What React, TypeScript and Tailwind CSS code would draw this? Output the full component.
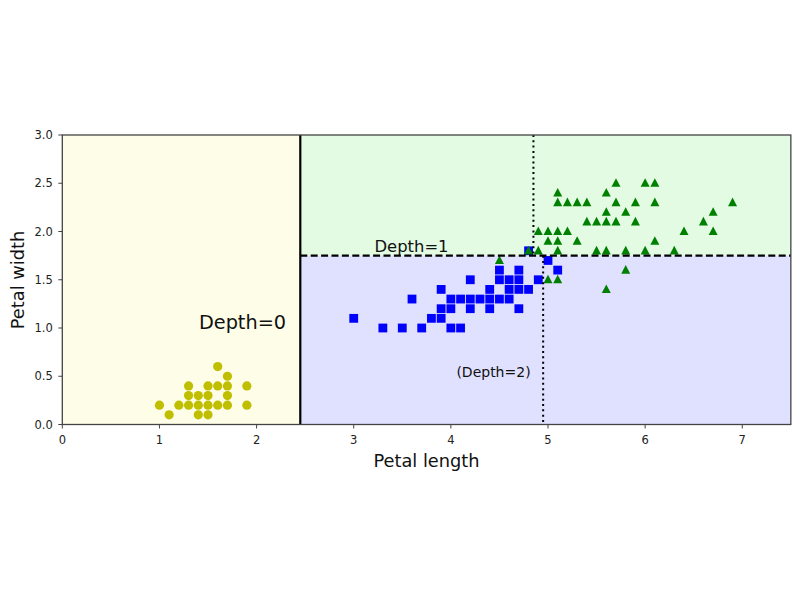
const X0 = 62.3;
const XS = 97.14;
const Y0 = 424.5;
const YS = 96.5;

const px = (v: number) => X0 + v * XS;
const py = (v: number) => Y0 - v * YS;

const setosa: [number, number][] = [
  [1.4, 0.2], [1.3, 0.2], [1.5, 0.2], [1.7, 0.4], [1.4, 0.3], [1.5, 0.1],
  [1.6, 0.2], [1.4, 0.1], [1.1, 0.1], [1.2, 0.2], [1.5, 0.4], [1.3, 0.4],
  [1.7, 0.3], [1.5, 0.3], [1.7, 0.2], [1.0, 0.2], [1.7, 0.5], [1.9, 0.2],
  [1.6, 0.4], [1.3, 0.3], [1.6, 0.6], [1.9, 0.4],
];

const versicolor: [number, number][] = [
  [4.7, 1.4], [4.5, 1.5], [4.9, 1.5], [4.0, 1.3], [4.6, 1.5], [4.5, 1.3],
  [4.7, 1.6], [3.3, 1.0], [4.6, 1.3], [3.9, 1.4], [3.5, 1.0], [4.2, 1.5],
  [4.0, 1.0], [3.6, 1.3], [4.4, 1.4], [4.1, 1.0], [3.9, 1.1], [4.8, 1.8],
  [4.7, 1.2], [4.3, 1.3], [4.8, 1.4], [5.0, 1.7], [3.8, 1.1], [3.7, 1.0],
  [3.9, 1.2], [5.1, 1.6], [4.5, 1.6], [4.7, 1.5], [4.4, 1.3], [4.1, 1.3],
  [4.4, 1.2], [4.6, 1.4], [4.0, 1.2], [4.2, 1.3], [4.2, 1.2], [3.0, 1.1],
];

const virginica: [number, number][] = [
  [6.0, 2.5], [5.1, 1.9], [5.9, 2.1], [5.6, 1.8], [5.8, 2.2], [6.6, 2.1],
  [4.5, 1.7], [6.3, 1.8], [5.8, 1.8], [6.1, 2.5], [5.1, 2.0], [5.3, 1.9],
  [5.5, 2.1], [5.0, 2.0], [5.1, 2.4], [5.3, 2.3], [5.5, 1.8], [6.7, 2.2],
  [6.9, 2.3], [5.0, 1.5], [5.7, 2.3], [4.9, 2.0], [6.7, 2.0], [4.9, 1.8],
  [5.7, 2.1], [6.0, 1.8], [4.8, 1.8], [5.6, 2.1], [5.8, 1.6], [6.1, 1.9],
  [6.4, 2.0], [5.6, 2.2], [5.1, 1.5], [5.6, 1.4], [6.1, 2.3], [5.6, 2.4],
  [5.4, 2.1], [5.1, 2.3], [5.9, 2.3], [5.7, 2.5], [5.2, 2.3], [5.0, 1.9],
  [5.2, 2.0], [5.4, 2.3], [5.1, 1.8],
];

const xTicks = [0, 1, 2, 3, 4, 5, 6, 7];
const yTicks = [0, 0.5, 1, 1.5, 2, 2.5, 3];

const font = "'DejaVu Sans', 'Liberation Sans', sans-serif";

function Chart() {
  const left = px(0);
  const right = px(7.5);
  const top = py(3);
  const bottom = py(0);
  const split0 = px(2.45);
  const split1 = py(1.75);

  return (
    <svg width="800" height="600" viewBox="0 0 800 600" className="block">
      {/* regions */}
      <rect x={left} y={top} width={split0 - left} height={bottom - top} fill="#fefde7" />
      <rect x={split0} y={top} width={right - split0} height={split1 - top} fill="#e2fbe2" />
      <rect x={split0} y={split1} width={right - split0} height={bottom - split1} fill="#e0e0ff" />

      {/* data */}
      {setosa.map(([a, b], i) => (
        <circle key={"s" + i} cx={px(a)} cy={py(b)} r="4.6" fill="#bfbf00" />
      ))}
      {versicolor.map(([a, b], i) => (
        <rect key={"v" + i} x={px(a) - 4.4} y={py(b) - 4.4} width="8.8" height="8.8" fill="#0000ff" />
      ))}
      {virginica.map(([a, b], i) => {
        const cx = px(a);
        const cy = py(b);
        return (
          <polygon
            key={"g" + i}
            points={`${cx},${cy - 5} ${cx + 4.5},${cy + 3.6} ${cx - 4.5},${cy + 3.6}`}
            fill="#008000"
          />
        );
      })}

      {/* decision boundaries */}
      <line x1={split0} y1={top} x2={split0} y2={bottom} stroke="#000" strokeWidth="2.2" />
      <line x1={split0} y1={split1} x2={right} y2={split1} stroke="#000" strokeWidth="2.2" strokeDasharray="7 3.4" />
      <line x1={px(4.95)} y1={split1} x2={px(4.95)} y2={bottom} stroke="#000" strokeWidth="2" strokeDasharray="2 3.3" />
      <line x1={px(4.85)} y1={top} x2={px(4.85)} y2={split1} stroke="#000" strokeWidth="2" strokeDasharray="2 3.3" />

      {/* frame */}
      <rect x={left} y={top} width={right - left} height={bottom - top} fill="none" stroke="#444" strokeWidth="1.3" />

      {/* ticks */}
      <g fontFamily={font} fontSize="11.5" fill="#222">
        {xTicks.map((t) => (
          <g key={"x" + t}>
            <line x1={px(t)} y1={bottom} x2={px(t)} y2={bottom + 4} stroke="#444" strokeWidth="1" />
            <text x={px(t)} y={bottom + 19.5} textAnchor="middle">{t}</text>
          </g>
        ))}
        {yTicks.map((t) => (
          <g key={"y" + t}>
            <line x1={left - 4} y1={py(t)} x2={left} y2={py(t)} stroke="#444" strokeWidth="1" />
            <text x={left - 9.5} y={py(t) + 4.2} textAnchor="end">{t.toFixed(1)}</text>
          </g>
        ))}
      </g>

      {/* labels */}
      <g fontFamily={font} fill="#111">
        <text x="426.5" y="466.5" fontSize="17.8" textAnchor="middle">Petal length</text>
        <text
          x="0"
          y="0"
          fontSize="17.8"
          textAnchor="middle"
          transform="translate(24 280) rotate(-90)"
        >
          Petal width
        </text>
        <text x="242.5" y="329" fontSize="19.3" textAnchor="middle">Depth=0</text>
        <text x="411.5" y="251.5" fontSize="16.4" textAnchor="middle">Depth=1</text>
        <text x="493.5" y="376.5" fontSize="14" textAnchor="middle">(Depth=2)</text>
      </g>
    </svg>
  );
}

export default function App() {
  return (
    <div className="w-[800px] h-[600px] bg-white overflow-hidden">
      <Chart />
    </div>
  );
}
